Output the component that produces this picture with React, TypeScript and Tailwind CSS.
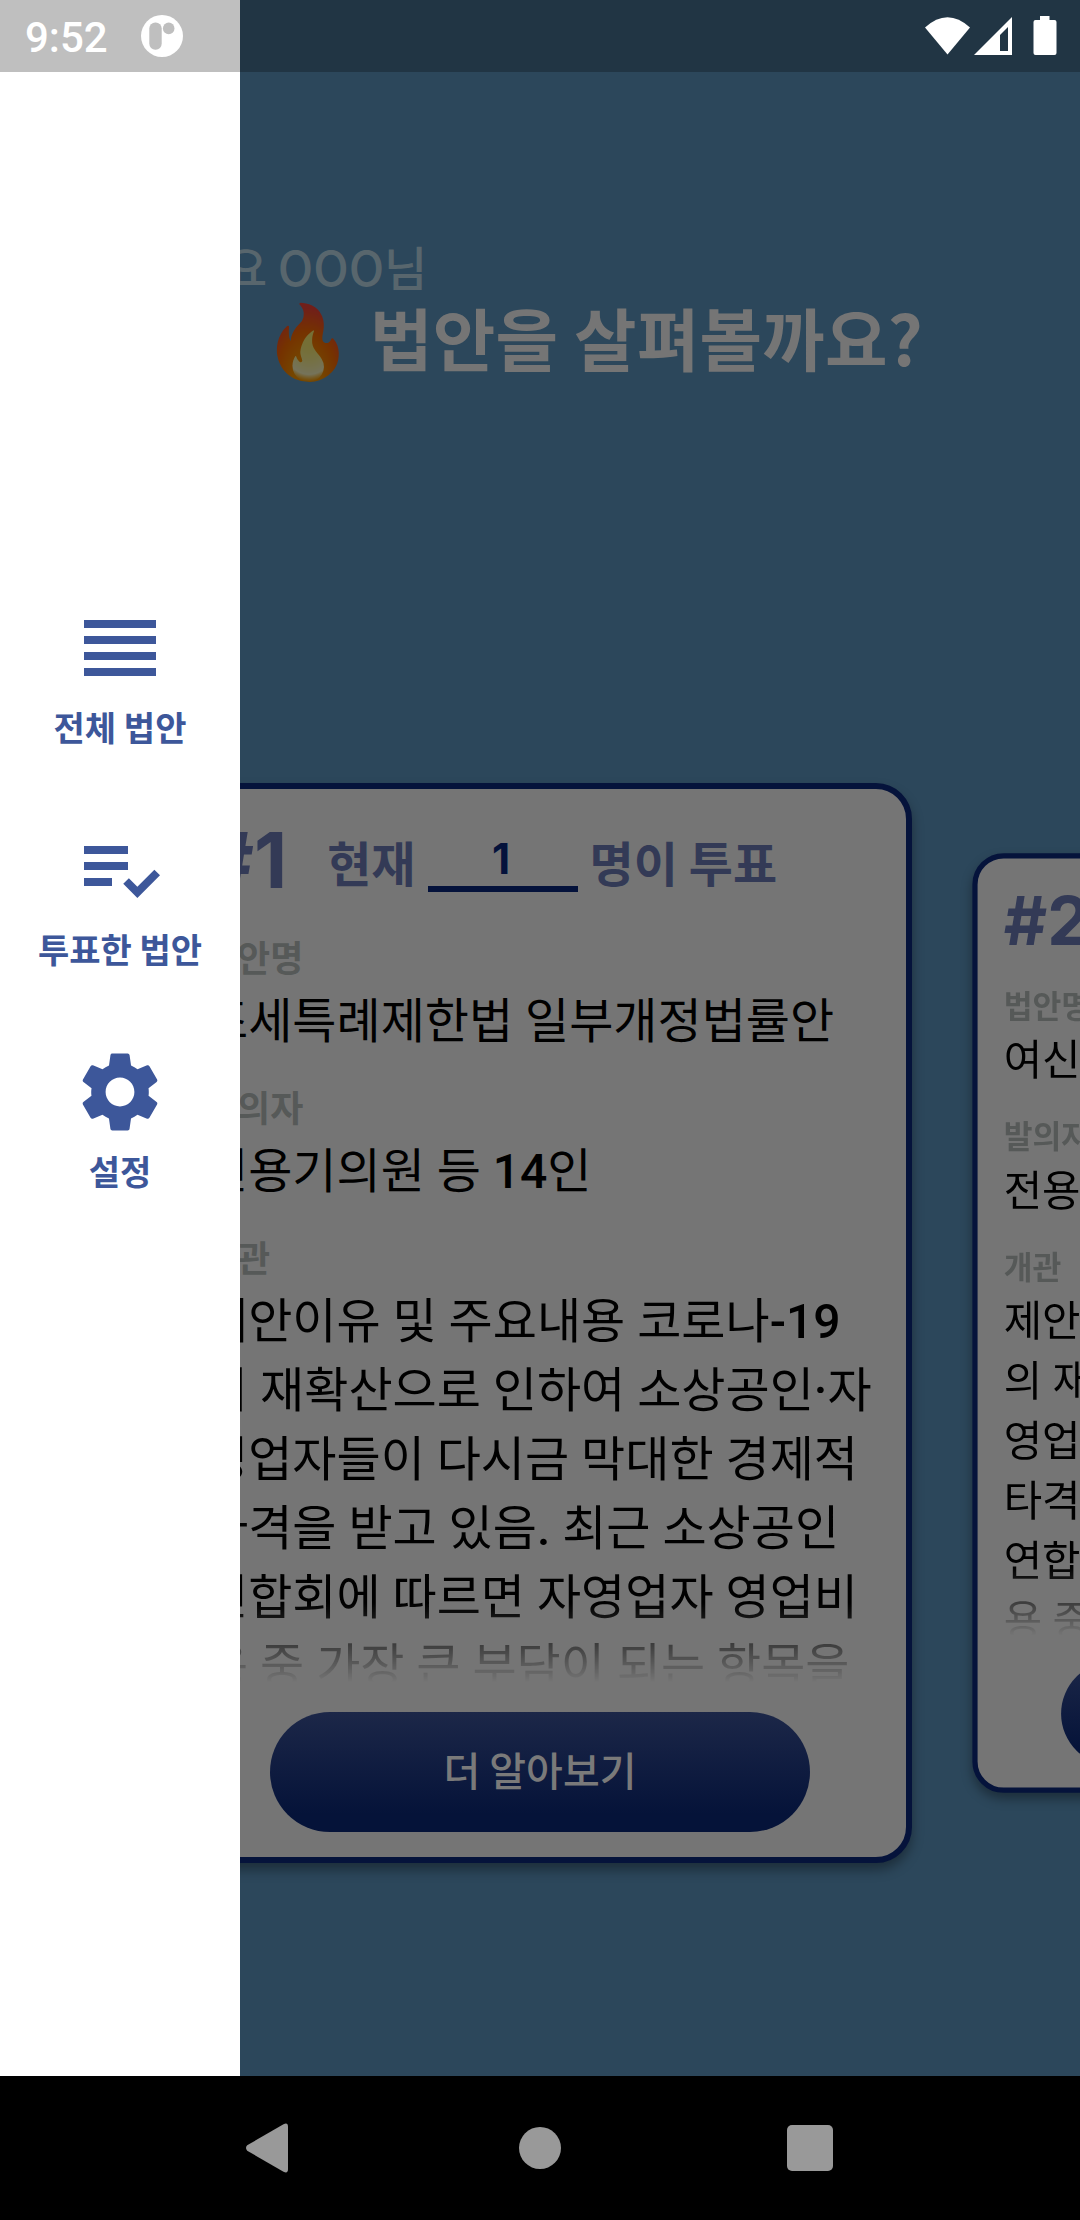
import { MdPlaylistAddCheck, MdReorder, MdSettings } from 'react-icons/md';

type Bill = { rank: number; votes: number; name: string; proposer: string; summary: string[] };

const summary = [
  '제안이유 및 주요내용 코로나-19',
  '의 재확산으로 인하여 소상공인·자',
  '영업자들이 다시금 막대한 경제적',
  '타격을 받고 있음. 최근 소상공인',
  '연합회에 따르면 자영업자 영업비',
  '용 중 가장 큰 부담이 되는 항목을',
];

const bills: Bill[] = [
  { rank: 1, votes: 1, name: '조세특례제한법 일부개정법률안', proposer: '전용기의원 등 14인', summary },
  { rank: 2, votes: 1, name: '여신전문금융업법 일부개정법률안', proposer: '전용기의원 등 14인', summary },
];

const menu = [
  { icon: MdReorder, label: '전체 법안' },
  { icon: MdPlaylistAddCheck, label: '투표한 법안' },
  { icon: MdSettings, label: '설정' },
];

/* Hangul stays at regular weight while digits and punctuation are medium. */
function Mixed({ text }: { text: string }) {
  return (
    <>
      {text.split(/([0-9.·-]+)/).map((part, i) => (
        <span key={i} className={/^[0-9.·-]+$/.test(part) ? 'font-medium' : 'font-normal'}>
          {part}
        </span>
      ))}
    </>
  );
}

function Field({ label, value }: { label: string; value: string }) {
  return (
    <div className="mb-[29px]">
      <div className="text-[36px] leading-[42px] font-bold text-[#565958]">{label}</div>
      <div className="mt-2.5 font-[Roboto,'Noto_Sans_CJK_KR',sans-serif] text-[48px] leading-[69px]">
        <Mixed text={value} />
      </div>
    </div>
  );
}

function BillCard({ bill, className = '' }: { bill: Bill; className?: string }) {
  return (
    <article
      className={`flex h-[1080px] w-[744px] shrink-0 flex-col rounded-[36px] border-[6px] border-[#05133b] bg-[#757575] px-[30px] whitespace-nowrap shadow-[0_7px_12px_rgba(0,0,0,0.35)] ${className}`}
    >
      <header className="flex h-[146px] shrink-0 items-start text-[48px] leading-[48px] font-bold text-[#333a56]">
        <span className="mt-[33px] font-[Inter,sans-serif] text-[77px] leading-[77px]">#{bill.rank}</span>
        <span className="mt-12 ml-10">현재</span>
        <span className="mt-[43px] ml-3 w-[150px] border-b-[6px] border-[#04123b] pr-[3px] text-center font-[Inter,sans-serif] text-[42px] leading-[54px] text-[#04123b]">
          {bill.votes}
        </span>
        <span className="mt-12 ml-3">명이 투표</span>
      </header>
      <Field label="법안명" value={bill.name} />
      <Field label="발의자" value={bill.proposer} />
      <div className="text-[36px] leading-[42px] font-bold text-[#565958]">개관</div>
      <div className="mt-2.5 h-[395px] shrink-0 overflow-hidden mask-[linear-gradient(to_bottom,black_316px,transparent_395px)] font-[Roboto,'Noto_Sans_CJK_KR',sans-serif] text-[48px] leading-[69px]">
        {bill.summary.map((line) => (
          <p key={line}>
            <Mixed text={line} />
          </p>
        ))}
      </div>
      <button className="mt-[30px] h-[120px] w-[540px] shrink-0 self-center rounded-full bg-[linear-gradient(to_bottom,#1c2748,#051339_85%)] pb-[5px] text-[40px] leading-[115px] font-medium text-[#7a7a7a]">
        더 알아보기
      </button>
    </article>
  );
}

function StatusBar() {
  return (
    <div className="absolute inset-x-0 top-0 flex h-[72px] items-center bg-black/25 text-white">
      <span className="ml-[25px] pt-[3px] font-[Roboto,sans-serif] text-[42px] leading-[69px] font-medium">9:52</span>
      <svg className="ml-[33px] size-[42px]" viewBox="0 0 42 42">
        <circle cx="21" cy="21" r="21" fill="#fff" />
        <rect x="8.3" y="7.6" width="12.4" height="27.2" rx="6" fill="#bfbfbf" />
        <circle cx="27.7" cy="13.4" r="5.8" fill="#bfbfbf" />
      </svg>
      <svg className="ml-auto h-[40px] w-[132px]" viewBox="0 0 132 40" fill="#fff">
        <path d="M0 11.5Q22.5-9 45 11.5L22.5 38.5Z" />
        <path fillRule="evenodd" d="M87 1V39H49ZM83 11L75 19V35H83Z" />
        <path d="M115 0h9.500v4h5a2 2 0 0 1 2 2v31a2 2 0 0 1-2 2h-19a2 2 0 0 1-2-2v-31a2 2 0 0 1 2-2h4.500z" />
      </svg>
      <span className="w-[23px]" />
    </div>
  );
}

export default function App() {
  return (
    <div className="relative flex h-[2220px] w-[1080px] flex-col overflow-hidden bg-[#2c475b] font-['Noto_Sans_CJK_KR',sans-serif] text-black">
      <main className="flex flex-1 flex-col overflow-hidden pt-[238px] whitespace-nowrap">
        <p className="pl-[51px] text-[47px] leading-[56px] font-medium text-[#58666d]">안녕하세요 OOO님</p>
        <h1 className="mt-[3px] flex h-20 pl-[263px] text-[68px] leading-[80px] font-bold tracking-[0.2px] text-[#757575]">
          <span className="w-[107px] text-[72px] leading-[78px] brightness-[0.46]">🔥</span>
          <span>법안을 살펴볼까요?</span>
        </h1>
        <section className="mt-[406px] flex gap-3 pl-[168px]">
          <BillCard bill={bills[0]} />
          <BillCard bill={bills[1]} className="scale-[0.87]" />
        </section>
      </main>

      <nav className="absolute top-0 left-0 flex h-[2076px] w-60 flex-col items-center gap-[72px] bg-white pt-[600px] text-[#3d579a]">
        {menu.map(({ icon: Icon, label }) => (
          <a key={label} className="flex flex-col items-center">
            <Icon className="size-24" />
            <span className="mt-[7px] -mb-px text-[34px] leading-[48px] font-bold">{label}</span>
          </a>
        ))}
      </nav>

      <StatusBar />

      <footer className="flex h-36 shrink-0 items-center bg-black pl-[246px] text-[#999]">
        <svg className="h-[50px] w-[42px]" viewBox="0 0 42 50" fill="currentColor">
          <path d="M1.200 22.300 37.500 1.300Q42-1 42 4V46Q42 51 37.500 48.700L1.200 27.700Q-1.200 25 1.200 22.300Z" />
        </svg>
        <span className="ml-[231px] size-[42px] rounded-full bg-current" />
        <span className="ml-[226px] size-[46px] rounded-[5px] bg-current" />
      </footer>
    </div>
  );
}
